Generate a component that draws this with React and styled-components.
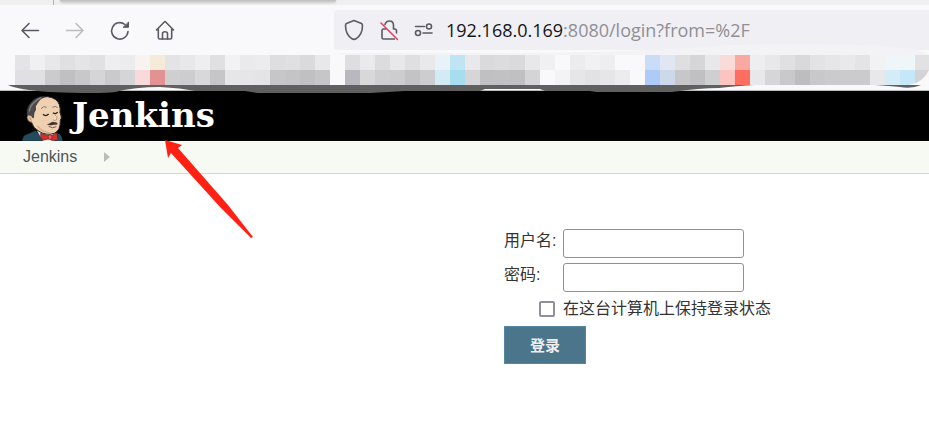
import React from "react"
import styled, { createGlobalStyle, css } from "styled-components"

const GlobalStyle = createGlobalStyle`
  *,
  *::before,
  *::after {
    box-sizing: border-box;
  }

  body {
    margin: 0;
    background: #fff;
    color: #333;
    font-family: "Liberation Sans", "Noto Sans CJK SC", sans-serif;
    font-size: 16px;
    line-height: 24px;
  }
`

const Page = styled.div`
  position: relative;
  overflow: hidden;
`

/* browser chrome */

const TabStrip = styled.div`
  display: flex;
  height: 5px;
  background: #f0f0f0;
`

const TabEdge = styled.div`
  width: 54px;
  border-right: 1px solid #b4b4b6;
`

const TabShadow = styled.div`
  width: 276px;
  height: 3px;
  margin-left: 6px;
  border-radius: 0 0 4px 4px;
  background: linear-gradient(#bcbcbc, #dadada);
  box-shadow: 0 0 3px #ccc;
`

const Toolbar = styled.div`
  position: relative;
  display: flex;
  align-items: center;
  height: 50px;
  padding-left: 19px;
  background: #f9f9fb;
`

const NavButtons = styled.div`
  display: flex;
  gap: 23px;
  width: 315px;
`

const iconButton = css`
  display: flex;
  align-items: center;
  justify-content: center;
  padding: 0;
  border: 0;
  background: none;
  cursor: pointer;
`

const NavButton = styled.button`
  ${iconButton}
  width: 22px;
  height: 22px;
  color: ${({ disabled }) => (disabled ? "#bdbdc0" : "#5b5b66")};
`

const UrlBar = styled.div`
  display: flex;
  flex: 1;
  align-items: center;
  height: 40px;
  padding-left: 9px;
  border-radius: 4px 0 0 4px;
  background: #f0f0f4;
`

const UrlIcons = styled.div`
  display: flex;
  gap: 13px;
  width: 103px;
`

const UrlIconButton = styled.button`
  ${iconButton}
  width: 22px;
  height: 22px;
  color: #5b5b66;
`

const Url = styled.div`
  color: #8f8f94;
  font-family: "Open Sans", "Noto Sans", sans-serif;
  font-size: 18px;
  white-space: nowrap;
`

const Host = styled.span`
  color: #15141a;
`

const Bookmarks = styled.div`
  height: 36px;
  padding-left: 15px;
  border-bottom: 1px solid #b9bcbc;
  background: #f9f9fb;
  overflow: hidden;

  svg {
    display: block;
  }
`

/* jenkins page */

const Header = styled.header`
  display: flex;
  height: 50px;
  padding-left: 15px;
  background: #000;
`

const Brand = styled.a`
  display: flex;
  color: #fff;
  text-decoration: none;
`

const Wordmark = styled.span`
  margin-left: -3px;
  font-family: "DejaVu Serif", serif;
  font-size: 34px;
  font-weight: bold;
  line-height: 48px;
`

const Breadcrumbs = styled.nav`
  display: flex;
  align-items: center;
  gap: 27px;
  height: 33px;
  padding-left: 23px;
  border-bottom: 1px solid #d3d7cf;
  background: #f6faf2;
`

const Crumb = styled.a`
  color: #4d545d;
  text-decoration: none;
`

const Main = styled.main`
  padding: 55px 0 72px 504px;
`

const Form = styled.form`
  display: grid;
  grid-template-columns: 59px 181px;
  row-gap: 5px;
  align-items: start;
`

const Label = styled.label`
  white-space: nowrap;
`

const TextInput = styled.input`
  width: 100%;
  height: 29px;
  padding: 2px 4px;
  border: 1px solid #8f8f9d;
  border-radius: 3px;
  background: #fff;
  font: inherit;
`

const Checkbox = styled.input`
  justify-self: end;
  align-self: center;
  width: 16px;
  height: 16px;
  margin: 0 8px 0 0;
  appearance: none;
  border: 2px solid #8f8f9d;
  border-radius: 2px;
  background: #fff;

  &:checked {
    background: #4b758b;
  }
`

const SubmitButton = styled.button`
  grid-column: 1 / -1;
  justify-self: start;
  width: 82px;
  height: 38px;
  padding: 0 0 2px;
  border: 1px solid #5488a0;
  background: #4b758b;
  color: #eee;
  font: bold 15px "Liberation Sans", "Noto Sans CJK SC", sans-serif;
  cursor: pointer;
`

const Scribble = styled.svg`
  position: absolute;
  top: 0;
  left: 0;
  pointer-events: none;
`

const strokeProps = {
  fill: "none",
  stroke: "currentColor",
  strokeWidth: 1.6,
  strokeLinecap: "round",
  strokeLinejoin: "round",
}

const BackIcon = () => (
  <svg width="22" height="22" {...strokeProps}>
    <path d="M19.5 11.5H3M10 4.500L3 11.500L10 18.500" />
  </svg>
)

const ForwardIcon = () => (
  <svg width="22" height="22" {...strokeProps}>
    <path d="M2.500 11.500H19M12 4.500L19 11.500L12 18.500" />
  </svg>
)

const ReloadIcon = () => (
  <svg width="22" height="22" {...strokeProps}>
    <path d="M19 12.500A8.200 8.200 0 1 1 16 5.500" />
    <path d="M19.500 3.500V8.300H14.500Z" fill="currentColor" strokeWidth="1" />
  </svg>
)

const HomeIcon = () => (
  <svg width="22" height="22" {...strokeProps}>
    <path d="M2.500 11L10.300 3Q11 2.400 11.700 3L19.500 11M4.300 9.500V18.500Q4.300 20 5.800 20H16.200Q17.700 20 17.700 18.500V9.500" />
    <path d="M8.500 20V14.500Q8.500 12.800 11 12.800T13.500 14.500V20" />
  </svg>
)

const ShieldIcon = () => (
  <svg width="22" height="22" {...strokeProps}>
    <path d="M11 1.500L18.500 4.500Q19.500 5 19.500 6.500Q19.500 15.500 13 19.800Q11 21 9 19.800Q2.500 15.500 2.500 6.500Q2.500 5 3.500 4.500Z" />
  </svg>
)

const LockOffIcon = () => (
  <svg width="22" height="22" {...strokeProps}>
    <path d="M7 5.500Q8 2 11.500 2Q15.500 2 15.500 6.500V10H16.500Q18.500 10 18.500 12V14M8 10H5.500Q4 10 4 11.500V18.500Q4 20 5.500 20H16.500" />
    <path d="M3 4L19.500 20.500" stroke="#ee3b61" />
  </svg>
)

const PermissionsIcon = () => (
  <svg width="22" height="22" {...strokeProps}>
    <path d="M2.500 7.500H11.500M10 14H19" />
    <circle cx="16" cy="7.500" r="2.500" />
    <circle cx="5" cy="14" r="2.500" />
  </svg>
)

// [top, bottom] colour of every blurred bookmark
const blurredCells = [
  ["e4e4e6", "e0dfe5"], ["f0f0f2", "e0e0e2"], ["e8e8ea", "cbcbcd"], ["e0e0e2", "c0c0c2"],
  ["e4e4e6", "c8c8ca"], ["e1e1e3", "d5d5d7"], ["eeeef0", "cacacc"], ["ececee", "d5d5d7"],
  ["f8f2f0", "f7dad9"], ["f6ebd9", "e29292"], ["e4e4e6", "cfcfd1"], ["e8e8ea", "cdcdcf"],
  ["eeeef0", "d8d8da"], ["e0e0e2", "c6c6c8"], ["f2f2f4", "e6e6e8"], ["eaeaec", "e6e6e8"],
  ["ececee", "e4e4e6"], ["dedee0", "c6c6c8"], ["e0e0e2", "c4c4c6"], ["dadadc", "c0c0c2"],
  ["e8e8ea", "c6c6c8"], ["f9f9fb", "f9f9fb"], ["dedee0", "b9b8bf"], ["eaeaec", "d8d8da"],
  ["dcdcde", "cfcfd1"], ["e8e8ea", "cdcdcf"], ["dfdfe1", "c3c3c5"], ["e9e9eb", "cdcdcf"],
  ["e7f3f8", "d3ebf5"], ["bfe5f3", "a6def0"], ["e9e9eb", "d6d6d8"], ["dadadc", "c0c0c2"],
  ["dcdcde", "c1c1c3"], ["dadadc", "c0c0c2"], ["e8e8ea", "d4d4d6"], ["f0f0f2", "f9f9fb"],
  ["f9f9fb", "f3f3f5"], ["ececee", "e6e6e8"], ["f1f1f3", "e2e2e4"], ["eeeef0", "e6e6e8"],
  ["f9f9fb", "ececee"], ["f9f9fb", "f9f9fb"], ["c9ddf8", "aecbf7"], ["e0e7f2", "ccd9ea"],
  ["dfdfe1", "c7c7c9"], ["d6d6d8", "c0c0c2"], ["e8e8ea", "cfcfd1"], ["f9dcda", "fbc4c1"],
  ["faa8a0", "fd6e60"], ["eeeef0", "e8e8ea"], ["e8e8ea", "d6d6d8"], ["e0e0e2", "c9c9cb"],
  ["d9d9db", "bdbdbf"], ["e3e3e5", "c8c8ca"], ["e6e6e8", "cbcbcd"], ["e9e9eb", "cbcbcd"],
  ["e4e4e6", "cbcbcd"], ["f2f2f4", "e8e8ea"], ["eff6fa", "d4ecf8"], ["eff6fa", "c6e7f8"],
  ["e2e2e4", "d4d4d6"],
]

const Mosaic = () => (
  <svg width="915" height="30" shapeRendering="crispEdges" aria-hidden="true">
    {blurredCells.map(([top, bottom], i) => (
      <g key={i}>
        <rect x={i * 15} y="0" width="15" height="15" fill={`#${top}`} />
        <rect x={i * 15} y="15" width="15" height="15" fill={`#${bottom}`} />
      </g>
    ))}
  </svg>
)

const Butler = () => (
  <svg width="60" height="50" viewBox="0 3 180 150" aria-hidden="true">
    <path d="M22 153Q24 136 34 134L62 122L92 153Z" fill="#244a5d" stroke="#17303c" strokeWidth="2" />
    <path d="M122 130L134 133Q142 140 143 153H118Z" fill="#244a5d" />
    <path d="M66 122L84 153H118L124 130Z" fill="#e9e5dc" />
    <path
      d="M48 92Q34 58 54 38Q68 20 98 20Q126 24 133 44Q137 56 135 68Q142 84 136 90Q137 122 118 130Q94 138 72 124Q54 114 50 98Z"
      fill="#efd0b0"
      stroke="#302722"
      strokeWidth="3"
    />
    <path
      d="M37 80Q32 56 47 39Q63 18 91 19Q73 26 66 41L61 49Q64 60 57 68L55 84L48 78Q42 75 39 82Z"
      fill="#4b4a4c"
      stroke="#272526"
      strokeWidth="2"
    />
    <path d="M43 64Q45 48 58 37Q66 28 78 23" fill="none" stroke="#85817f" strokeWidth="4" />
    <path d="M51 79Q38 70 36 82Q37 96 50 98" fill="#e6c3a0" stroke="#49382e" strokeWidth="2" />
    <path d="M43 82Q48 82 47 91" fill="none" stroke="#a78168" strokeWidth="2" />
    <path d="M78 56Q86 46 95 52M112 52Q121 46 128 53" fill="none" stroke="#8e7b6b" strokeWidth="3" />
    <path d="M84 73Q92 81 101 72M114 68Q121 74 128 67" fill="none" stroke="#292321" strokeWidth="4" />
    <path d="M119 73Q130 82 124 90Q119 93 114 89" fill="#f4ddc0" stroke="#a17d61" strokeWidth="2" />
    <path d="M94 101Q100 104 109 97Q114 93 119 97Q126 95 128 101Q125 106 116 104Q104 109 94 101Z" fill="#403733" />
    <path d="M101 109Q112 117 124 110" fill="none" stroke="#8f4f45" strokeWidth="3" />
    <path d="M68 108Q81 127 106 129" fill="none" stroke="#d3b08f" strokeWidth="4" />
    <path
      d="M77 130L100 137Q104 132 110 137L126 128L129 151H110L103 146L82 151Q75 141 77 130Z"
      fill="#d72f2b"
      stroke="#501d22"
      strokeWidth="2"
    />
    <path d="M99 137Q105 132 111 137L110 148H101Z" fill="#ed6259" stroke="#8e171b" strokeWidth="2" />
  </svg>
)

// smeared marker strokes over the bookmarks bar
const MarkerStrokes = () => (
  <Scribble width="929" height="100" aria-hidden="true">
    <path d="M340 53H540Q660 51 730 45Q850 43 895 47Q923 50 929 55H340Z" fill="#f3f3f5" />
    <path d="M929 70Q924 82 909 85H929Z" fill="#f9f9fb" />
    <path
      d="M8 85H754Q735 86 719 88Q700 88 672 92H596L590 91H545L540 89H485L480 91H405L370 93H258L245 91H195Q181 88 160 87Q135 87 115 92Q100 94 50 92Q18 90 8 85Z"
      fill="#5f605f"
    />
    <path d="M875 85H921Q912 89 900 87Q890 86 875 85Z" fill="#5f605f" />
  </Scribble>
)

const PointerArrow = () => (
  <Scribble width="260" height="240" aria-hidden="true">
    <path d="M165 140L182 145L178 148L228 205L253 237L251 238L220 207L171 153L168 158Z" fill="#ff2113" />
  </Scribble>
)

const App = () => {
  return (
    <Page>
      <GlobalStyle />
      <TabStrip>
        <TabEdge />
        <TabShadow />
      </TabStrip>
      <Toolbar>
        <NavButtons>
          <NavButton aria-label="Back">
            <BackIcon />
          </NavButton>
          <NavButton aria-label="Forward" disabled>
            <ForwardIcon />
          </NavButton>
          <NavButton aria-label="Reload">
            <ReloadIcon />
          </NavButton>
          <NavButton aria-label="Home">
            <HomeIcon />
          </NavButton>
        </NavButtons>
        <UrlBar>
          <UrlIcons>
            <UrlIconButton aria-label="Tracking protection">
              <ShieldIcon />
            </UrlIconButton>
            <UrlIconButton aria-label="Connection not secure">
              <LockOffIcon />
            </UrlIconButton>
            <UrlIconButton aria-label="Permissions">
              <PermissionsIcon />
            </UrlIconButton>
          </UrlIcons>
          <Url>
            <Host>192.168.0.169</Host>:8080/login?from=%2F
          </Url>
        </UrlBar>
      </Toolbar>
      <Bookmarks>
        <Mosaic />
      </Bookmarks>
      <Header>
        <Brand href="#">
          <Butler />
          <Wordmark>Jenkins</Wordmark>
        </Brand>
      </Header>
      <Breadcrumbs>
        <Crumb href="#">Jenkins</Crumb>
        <svg width="6" height="10" aria-hidden="true">
          <path d="M0 0L6 5L0 10Z" fill="#babdb6" />
        </svg>
      </Breadcrumbs>
      <Main>
        <Form onSubmit={e => e.preventDefault()}>
          <Label htmlFor="username">用户名:</Label>
          <TextInput id="username" type="text" />
          <Label htmlFor="password">密码:</Label>
          <TextInput id="password" type="password" />
          <Checkbox id="remember" type="checkbox" />
          <Label htmlFor="remember">在这台计算机上保持登录状态</Label>
          <SubmitButton type="submit">登录</SubmitButton>
        </Form>
      </Main>
      <MarkerStrokes />
      <PointerArrow />
    </Page>
  )
}

export default App
